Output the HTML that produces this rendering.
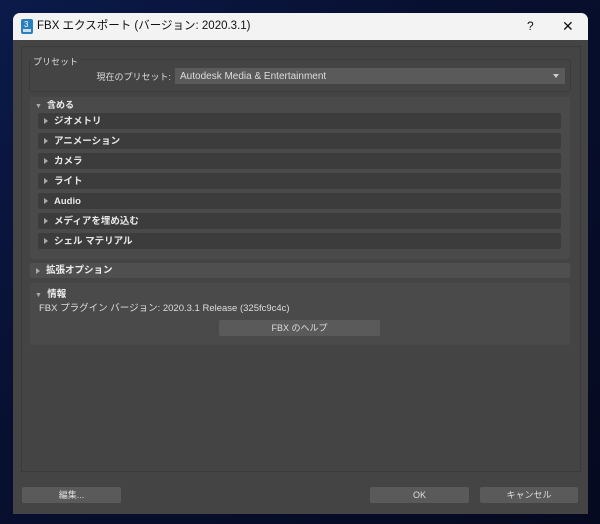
<!DOCTYPE html><html><head><meta charset="utf-8"><style>
*{margin:0;padding:0;box-sizing:border-box}
body{width:600px;height:524px;overflow:hidden;background:linear-gradient(135deg,#0b1a4a 0%,#081030 40%,#050a20 100%);font-family:"Liberation Sans","Noto Sans CJK JP",sans-serif;position:relative}
.abs{position:absolute}
.win{left:13px;top:13px;width:575px;height:501px;background:#444;border-radius:7px 7px 0 0;overflow:hidden}
.title{left:0;top:0;width:575px;height:27px;background:#f3f3f3;font-size:11.5px;color:#111;line-height:27px}
.t{font-size:9px;color:#ddd}
.hdr{background:#4f4f4f;height:15px;border-radius:2px}
.sub{background:#3c3c3c;height:16px;left:38px;width:523px;border-radius:2px;font-size:9.5px;font-weight:bold;color:#e8e8e8;line-height:12px;padding-top:3px;padding-left:16px}
.sub:before,.hdr .a{content:"";position:absolute;left:6px;top:5px;border-left:4px solid #aaa;border-top:3px solid transparent;border-bottom:3px solid transparent}
.btn{background:#5a5a5a;border-radius:2px;height:16px;font-size:9px;color:#ddd;text-align:center;line-height:16px}
</style></head><body>
<div class="abs win">
 <div class="abs title">
  <div class="abs" style="left:8px;top:6px;width:12px;height:15px;background:#2a7fbf;border-radius:2px"><div style="position:absolute;left:2px;bottom:2px;width:8px;height:3px;background:#cde"></div><div style="position:absolute;left:3px;top:1px;font-size:8px;color:#fff;line-height:9px">3</div></div>
  <div class="abs" style="left:24px;top:0">FBX エクスポート (バージョン: 2020.3.1)</div>
  <div class="abs" style="left:514px;top:0;font-size:12px">?</div>
  <div class="abs" style="left:549px;top:0;font-size:14px">✕</div>
 </div>
</div>
<div class="abs" style="left:21px;top:46px;width:560px;height:426px;border:1px solid #3a3a3a;background:#444"></div>
<div class="abs" style="left:29px;top:59px;width:542px;height:33px;border:1px solid #3a3a3a;border-radius:3px"></div>
<div class="abs t" style="left:31px;top:55px;background:#444;padding:0 2px">プリセット</div>
<div class="abs t" style="left:90px;width:81px;text-align:right;top:70px;white-space:nowrap">現在のプリセット:</div>
<div class="abs" style="left:175px;top:68px;width:390px;height:16px;background:#5a5a5a;font-size:10px;color:#ddd;line-height:17px;padding-left:5px">Autodesk Media &amp; Entertainment
 <div class="abs" style="right:6px;top:6px;border-top:4px solid #ccc;border-left:3px solid transparent;border-right:3px solid transparent"></div></div>
<div class="abs" style="left:30px;top:97px;width:540px;height:162px;background:#4a4a4a;border-radius:2px"></div>
<div class="abs t" style="left:35px;top:98px;font-weight:bold;color:#eee"><span style="font-size:7px;color:#aaa">▼</span>&nbsp; 含める</div>
<div class="abs sub" style="top:113px">ジオメトリ</div>
<div class="abs sub" style="top:133px">アニメーション</div>
<div class="abs sub" style="top:153px">カメラ</div>
<div class="abs sub" style="top:173px">ライト</div>
<div class="abs sub" style="top:193px">Audio</div>
<div class="abs sub" style="top:213px">メディアを埋め込む</div>
<div class="abs sub" style="top:233px">シェル マテリアル</div>
<div class="abs hdr" style="left:30px;top:263px;width:540px;font-size:9.5px;font-weight:bold;color:#eee;line-height:12px;padding-top:2px;padding-left:16px"><span class="a"></span>拡張オプション</div>
<div class="abs" style="left:30px;top:283px;width:540px;height:62px;background:#4a4a4a;border-radius:2px"></div>
<div class="abs t" style="left:35px;top:286px;font-weight:bold;color:#eee;font-size:9.5px"><span style="font-size:7px;color:#aaa">▼</span>&nbsp; 情報</div>
<div class="abs t" style="left:39px;top:300px;font-size:9.5px">FBX プラグイン バージョン: 2020.3.1 Release (325fc9c4c)</div>
<div class="abs btn" style="left:219px;top:320px;width:161px">FBX のヘルプ</div>
<div class="abs btn" style="left:22px;top:487px;width:99px">編集...</div>
<div class="abs btn" style="left:370px;top:487px;width:99px">OK</div>
<div class="abs btn" style="left:480px;top:487px;width:98px">キャンセル</div>
</body></html>
